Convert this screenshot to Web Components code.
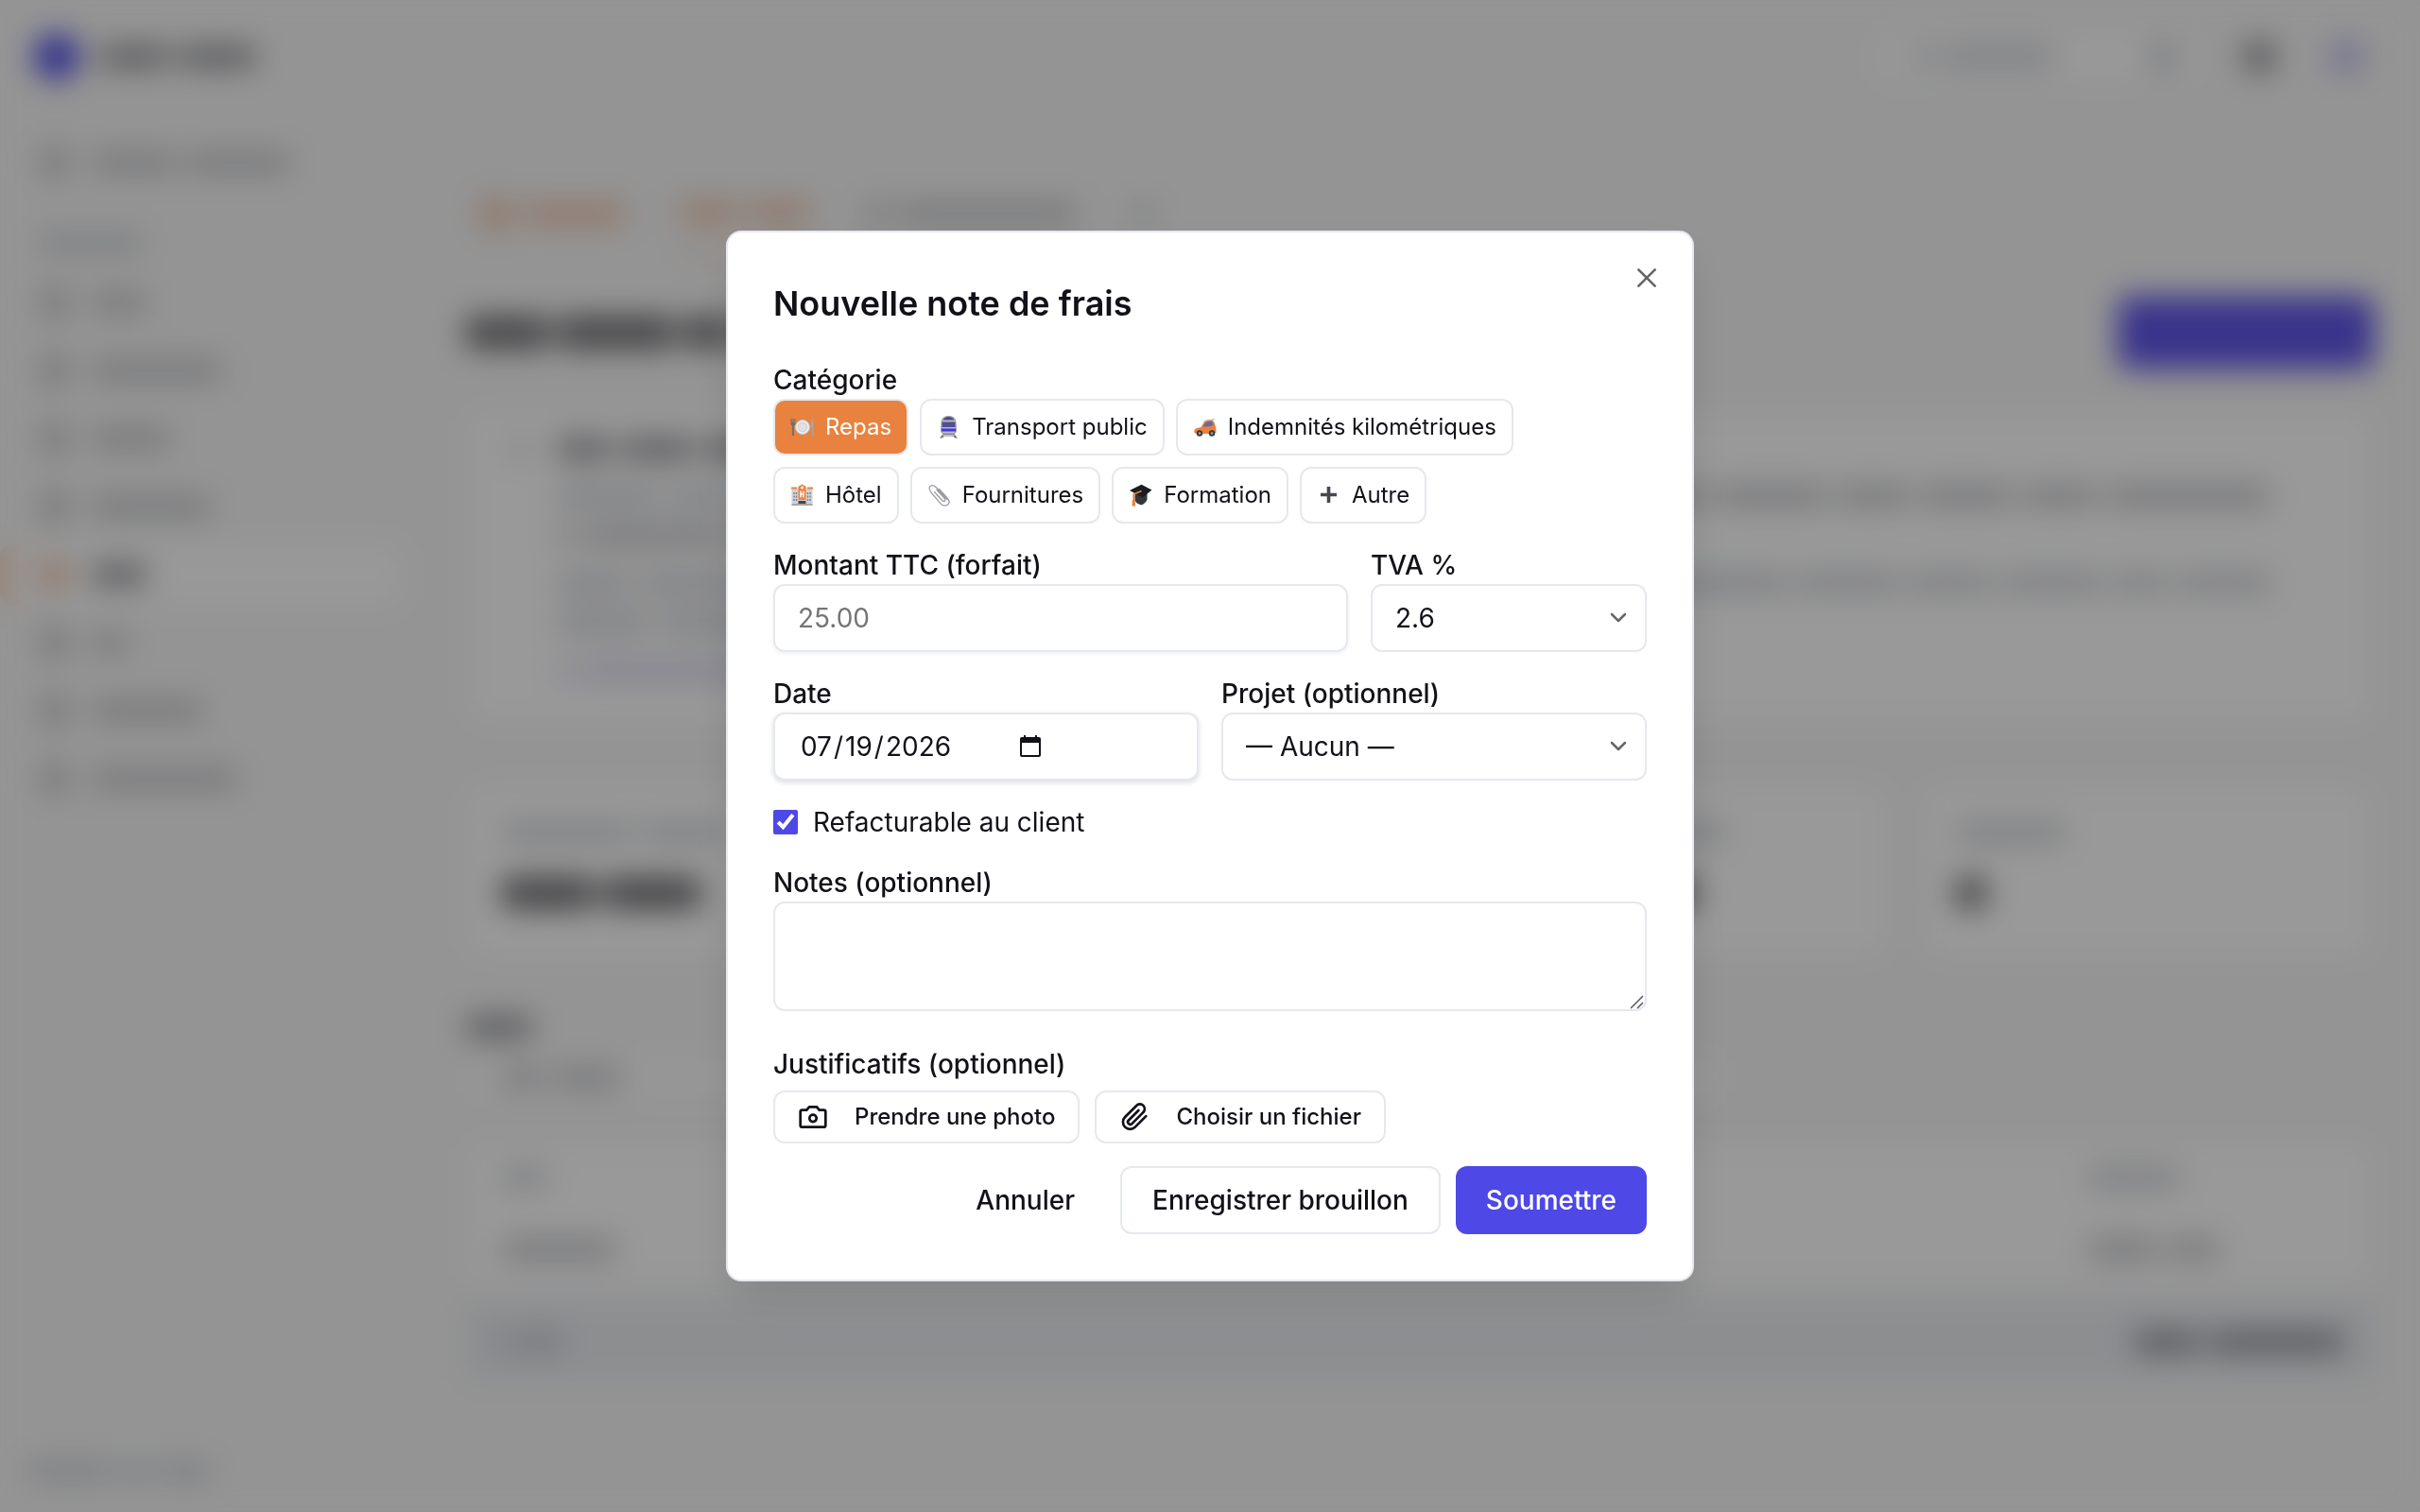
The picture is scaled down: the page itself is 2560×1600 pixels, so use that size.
<!DOCTYPE html>
<html lang="fr">
<head>
<meta charset="utf-8">
<meta name="viewport" content="width=device-width, initial-scale=1">
<title>Notes de frais</title>
<style>
  :root {
    --text: #111118;
    --border: #e5e8ee;
    --primary: #4d48e6;
    --accent: #e8823e;
    --page: #f7f7f7;
  }

  * {
    box-sizing: border-box;
  }

  body {
    margin: 0;
    background: var(--page);
    color: var(--text);
    font: 400 28px/40px Inter, "Liberation Sans", sans-serif;
  }
</style>
</head>
<body>
<expense-page></expense-page>
<modal-dialog heading="Nouvelle note de frais">
  <expense-form></expense-form>
</modal-dialog>

<script>
const base = `
  *, *::before, *::after { box-sizing: border-box; }
  button, input, select, textarea { font: inherit; color: inherit; margin: 0; }
  h1, h2, p { margin: 0; }
`;

/* Pictogrammes des catégories, dessinés sur une grille de 24 */
const emojis = {
  repas: `
    <path d="M0 3v5q0 2 1.400 2.500V21h2V10.500Q5 10 5 8V3H4v4h-.8V3H2v4h-.8V3z" fill="#6b7072"/>
    <circle cx="12.500" cy="12" r="7.500" fill="#eceef0" stroke="#c4c7cb" stroke-width="1"/>
    <circle cx="12.500" cy="12" r="4.800" fill="#dfe1e4" stroke="#cbced2" stroke-width="1"/>
    <path d="M24 3q-2.800 2-2.800 9h1v9H24z" fill="#a4a7aa"/>`,
  train: `
    <path d="M7 18h10l4.500 5.500h-3L17 21.500H7l-1.500 2h-3z" fill="#77787c"/>
    <path d="M6 20.500h12" stroke="#c5c6ca"/>
    <path d="M4.500 7Q4.500.5 12 .5T19.500 7l.5 9q0 2.500-3 3H7q-3-.5-3-3z" fill="#b9bac8" stroke="#8b8c9c" stroke-width=".8"/>
    <path d="M6 4.500Q7.500 1 12 1t6 3.500z" fill="#4f4d83"/>
    <path d="M5 6.500h14V12H5z" fill="#514f8d"/>
    <path d="M4.500 13.500h15v3h-15z" fill="#4239df"/>`,
  voiture: `
    <path d="M1 18q-1-4 3-5l4-1 3-5q1-2 4-2h4q3 0 4 5l1 4v4l-3 1H3z" fill="#e8823e"/>
    <path d="M10 11.500l2.500-4Q13.500 6 16 6h4l1 4q-5 2-11 1.500z" fill="#6b6a93"/>
    <path d="M11 6.500q2-2 5-2h5l1-1.500" fill="#bfc0c6" stroke="#aeb0b6" stroke-width="1"/>
    <circle cx="6.500" cy="18.500" r="3.200" fill="#37383d"/><circle cx="6.500" cy="18.500" r="1.300" fill="#a4a6ab"/>
    <circle cx="19.500" cy="18.500" r="3.200" fill="#37383d"/><circle cx="19.500" cy="18.500" r="1.300" fill="#a4a6ab"/>`,
  hotel: `
    <path d="M1 5h7V3l4-2.500L16 3v2h7v18H1z" fill="#d1d2d5"/>
    <path d="M.5 3.500h6v2h-6zM17.500 3.500h6v2h-6z" fill="#e8823e"/>
    <path d="M8 3l4-2.500L16 3v14H8z" fill="#e8823e"/>
    <circle cx="12" cy="4" r="1.500" fill="#fff"/>
    <path d="M10.500 7.500v7M13.500 7.500v7M10.500 11h3" stroke="#fff" stroke-width="1.400"/>
    <path d="M3.500 9v10M6 9v10M18 9v10M20.500 9v10" stroke="#77797f" stroke-width="1.300" stroke-dasharray="2 1.500"/>
    <path d="M8 18h8v5H8z" fill="#45464a"/><path d="M1 22h22" stroke="#a5a6aa" stroke-width="2"/>`,
  trombone: `
    <path d="M20.500 16.500L8.500 3.500C6 .8 2.500 1 1.800 3.500S2 7.500 4 9.800l9.500 11c2.500 2.800 6 2.800 7.800 1s1.700-4-.3-6.300L12 5.500M7 8.500l8 9c1 1.200 2.400 1.200 3 .5s.5-1.600-.4-2.800L9.500 6.500" fill="none" stroke="#9b9da2" stroke-width="1.300" stroke-linecap="round"/>`,
  diplome: `
    <path d="M6 9v8q1 4 7 5.500 5-2.500 6-6V9z" fill="#35363a"/>
    <path d="M13 .8L24 6.500 14 14.500.500 7z" fill="#1c1d21"/>
    <path d="M13 7.500L4.800 11v12" fill="none" stroke="#e8823e" stroke-width="1.800"/>
    <path d="M3.300 17h3l.3 6.500H3z" fill="#e8823e"/>`,
  plus: `
    <path d="M3.500 11.500h17M12 3v17" stroke="#46484d" stroke-width="3.600"/>`
};

const icons = {
  fermer: '<path d="M5.500 5.500l13 13M18.500 5.500l-13 13"/>',
  photo: '<path d="M3.500 6.500H7L9 4h6l2 2.500h3.500q1.500 0 1.500 1.500v10.500q0 1.500-1.500 1.500h-17Q2 20 2 18.500V8q0-1.500 1.500-1.500z"/><circle cx="12" cy="13" r="2.800"/>',
  fichier: '<path d="M21.200 11.300l-8.600 8.700a5.600 5.600 0 0 1-8-8l8.700-8.600a3.800 3.800 0 1 1 5.300 5.300l-8.500 8.600a1.900 1.900 0 0 1-2.700-2.700l7.900-7.900"/>'
};

/* Icône au trait, taille héritée de l'hôte */
class LineIcon extends HTMLElement {
  connectedCallback() {
    const root = this.attachShadow({ mode: 'open' });
    root.innerHTML = `
      <style>
        :host { display: block; width: 32px; height: 32px; flex: none; }
        svg { display: block; width: 100%; height: 100%; }
      </style>
      <svg viewBox="0 0 24 24" fill="none" stroke="currentColor" stroke-width="2"
        stroke-linecap="round" stroke-linejoin="round" aria-hidden="true">${icons[this.getAttribute('name')]}</svg>
    `;
  }
}

class CategoryChip extends HTMLElement {
  connectedCallback() {
    const root = this.attachShadow({ mode: 'open' });
    const active = this.hasAttribute('active');
    root.innerHTML = `
      <style>
        ${base}
        :host { display: block; }
        button {
          display: flex;
          align-items: center;
          gap: 12px;
          height: 60px;
          padding: 0 16px;
          border: 2px solid var(--border);
          border-radius: 12px;
          background: #fff;
          font-size: 24px;
          line-height: 32px;
          cursor: pointer;
        }
        button[aria-pressed="true"] { background: var(--accent); color: #fff; }
        svg { display: block; width: 25px; height: 24px; }
      </style>
      <button type="button" aria-pressed="${active}">
        <svg viewBox="0 0 24 24" aria-hidden="true">${emojis[this.getAttribute('icon')]}</svg>
        <slot></slot>
      </button>
    `;
    root.querySelector('button').addEventListener('click', () => {
      this.dispatchEvent(new CustomEvent('category-picked', { bubbles: true, composed: true }));
    });
  }

  setActive(active) {
    this.shadowRoot.querySelector('button').setAttribute('aria-pressed', active);
  }
}

class AppButton extends HTMLElement {
  connectedCallback() {
    const root = this.attachShadow({ mode: 'open' });
    const icon = this.getAttribute('icon');
    root.innerHTML = `
      <style>
        ${base}
        :host { display: block; }
        button {
          display: flex;
          align-items: center;
          gap: 28px;
          height: 72px;
          padding: 0 32px;
          border: 0;
          border-radius: 12px;
          background: transparent;
          font-weight: 500;
          white-space: nowrap;
          cursor: pointer;
        }
        :host([variant="outline"]) button { border: 2px solid var(--border); background: #fff; }
        :host([variant="primary"]) button { background: var(--primary); color: #fff; }
        :host([size="small"]) button { height: 56px; padding: 0 24px; font-size: 24px; }
      </style>
      <button type="button">${icon ? `<line-icon name="${icon}"></line-icon>` : ''}<slot></slot></button>
    `;
  }
}

class ModalDialog extends HTMLElement {
  connectedCallback() {
    const root = this.attachShadow({ mode: 'open' });
    root.innerHTML = `
      <style>
        ${base}
        :host {
          position: fixed;
          inset: 0;
          display: flex;
          align-items: center;
          justify-content: center;
          padding: 32px;
          background: rgba(0, 0, 0, 0.4);
          backdrop-filter: blur(16px);
        }
        section {
          position: relative;
          width: 100%;
          max-width: 1024px;
          max-height: 100%;
          padding: 48px;
          border: 2px solid var(--border);
          border-radius: 16px;
          background: #fff;
          box-shadow: 0 20px 50px -10px rgba(0, 0, 0, 0.16);
        }
        h2 { margin-bottom: 34px; font-size: 36px; line-height: 54px; font-weight: 600; }
        .close {
          position: absolute;
          top: 32px;
          right: 32px;
          padding: 0;
          border: 0;
          background: none;
          color: #666;
          cursor: pointer;
        }
      </style>
      <section role="dialog" aria-modal="true" aria-labelledby="heading">
        <h2 id="heading">${this.getAttribute('heading')}</h2>
        <slot></slot>
        <button class="close" type="button" aria-label="Fermer"><line-icon name="fermer"></line-icon></button>
      </section>
    `;
    root.querySelector('.close').addEventListener('click', () => this.remove());
  }
}

class ExpenseForm extends HTMLElement {
  connectedCallback() {
    const root = this.attachShadow({ mode: 'open' });
    root.innerHTML = `
      <style>
        ${base}
        :host { display: block; }
        form { display: flex; flex-direction: column; gap: 24px; }
        label, .label { display: block; font-weight: 500; }
        .chips { display: flex; flex-wrap: wrap; gap: 12px; }
        .amount { display: grid; grid-template-columns: 1fr 292px; gap: 24px; }
        .half { display: grid; grid-template-columns: 1fr 1fr; gap: 24px; }
        .control {
          display: block;
          width: 100%;
          height: 72px;
          padding: 0 24px;
          border: 2px solid var(--border);
          border-radius: 12px;
          background: #fff;
          outline: 0;
        }
        .raised { box-shadow: 0 2px 4px rgba(20, 30, 60, 0.06); }
        .date { display: flex; align-items: center; box-shadow: 0 2px 4px 1px rgba(20, 30, 60, 0.12); }
        ::placeholder { color: #757575; opacity: 1; }
        select.control {
          appearance: none;
          background: #fff url('data:image/svg+xml,<svg xmlns="http://www.w3.org/2000/svg" width="20" height="14" fill="none" stroke="%23666" stroke-width="2.500" stroke-linecap="round" stroke-linejoin="round"><path d="M3 3l7 7 7-7"/></svg>') no-repeat right 18px center;
        }
        input[type="date"] { width: 258px; padding: 0 0 0 2px; border: 0; outline: 0; background: none; }
        ::-webkit-datetime-edit-fields-wrapper { padding: 0; }
        ::-webkit-datetime-edit-text { padding: 0 1px; }
        ::-webkit-calendar-picker-indicator {
          width: 24px;
          height: 24px;
          padding: 0;
          margin: 0;
          background: url('data:image/svg+xml,<svg xmlns="http://www.w3.org/2000/svg" viewBox="0 0 24 24"><path d="M3 2h2V0h2v2h10V0h2v2h2q2 0 2 2v17q0 2-2 2H3q-2 0-2-2V4q0-2 2-2zM3 8v13h18V8z" fill="%23111118" fill-rule="evenodd"/></svg>') no-repeat center / contain;
        }
        .check { display: flex; align-items: center; gap: 16px; font-weight: 400; }
        .check input { width: 26px; height: 26px; accent-color: var(--primary); }
        textarea.control { height: 116px; padding: 16px 24px; resize: vertical; }
        textarea::-webkit-resizer {
          background: url('data:image/svg+xml,<svg xmlns="http://www.w3.org/2000/svg" width="15" height="15" stroke="%23555" stroke-width="1.500"><path d="M0 14L13 1M7 14l6-6"/></svg>') no-repeat right bottom;
        }
        .proofs { padding-top: 12px; }
        .files { display: flex; gap: 16px; padding-top: 8px; }
        .actions { display: flex; justify-content: flex-end; gap: 16px; }
      </style>
      <form>
        <div role="group" aria-labelledby="category">
          <span class="label" id="category">Catégorie</span>
          <div class="chips">
            <category-chip icon="repas" active>Repas</category-chip>
            <category-chip icon="train">Transport public</category-chip>
            <category-chip icon="voiture">Indemnités kilométriques</category-chip>
            <category-chip icon="hotel">Hôtel</category-chip>
            <category-chip icon="trombone">Fournitures</category-chip>
            <category-chip icon="diplome">Formation</category-chip>
            <category-chip icon="plus">Autre</category-chip>
          </div>
        </div>
        <div class="amount">
          <div>
            <label for="amount">Montant TTC (forfait)</label>
            <input class="control raised" id="amount" type="text" inputmode="decimal" placeholder="25.00">
          </div>
          <div>
            <label for="vat">TVA %</label>
            <select class="control" id="vat"><option>2.6</option></select>
          </div>
        </div>
        <div class="half">
          <div>
            <label for="date">Date</label>
            <div class="control date"><input id="date" type="date" value="2026-07-19"></div>
          </div>
          <div>
            <label for="project">Projet (optionnel)</label>
            <select class="control" id="project"><option>— Aucun —</option></select>
          </div>
        </div>
        <label class="check"><input type="checkbox" checked>Refacturable au client</label>
        <div>
          <label for="notes">Notes (optionnel)</label>
          <textarea class="control" id="notes"></textarea>
        </div>
        <div class="proofs" role="group" aria-labelledby="proofs">
          <span class="label" id="proofs">Justificatifs (optionnel)</span>
          <div class="files">
            <app-button variant="outline" size="small" icon="photo">Prendre une photo</app-button>
            <app-button variant="outline" size="small" icon="fichier">Choisir un fichier</app-button>
          </div>
        </div>
        <div class="actions">
          <app-button>Annuler</app-button>
          <app-button variant="outline">Enregistrer brouillon</app-button>
          <app-button variant="primary">Soumettre</app-button>
        </div>
      </form>
    `;

    const chips = root.querySelectorAll('category-chip');
    root.addEventListener('category-picked', (e) => {
      chips.forEach(chip => chip.setActive(chip === e.target));
    });
  }
}

/* Ligne de squelette : une barre par largeur donnée dans "w" */
class GhostLine extends HTMLElement {
  connectedCallback() {
    const root = this.attachShadow({ mode: 'open' });
    const widths = this.getAttribute('w').split(' ');
    root.innerHTML = `
      <style>
        :host { display: flex; align-items: center; gap: 8px; flex: none; color: #c6c7cb; }
        :host([tone="faint"]) { color: #d3d5da; }
        :host([tone="strong"]) { color: #909196; }
        :host([tone="bold"]) { color: #707074; }
        :host([tone="accent"]) { color: #f0c3a8; }
        :host([tone="link"]) { color: #d9daee; }
        i { height: 22px; border-radius: 10px; background: currentColor; }
        :host([size="large"]) i { height: 34px; }
      </style>
      ${widths.map(w => `<i style="width: ${w}px"></i>`).join('')}
    `;
  }
}

class SideNav extends HTMLElement {
  connectedCallback() {
    const root = this.attachShadow({ mode: 'open' });
    const items = [60, 140, 84, 128, 60, 40, 120, 156];
    const link = (w, current) => `
      <div class="item${current ? ' current' : ''}">
        <ghost-line w="28" size="large" tone="${current ? 'accent' : ''}"></ghost-line>
        <ghost-line w="${w}" tone="${current ? 'strong' : ''}"></ghost-line>
      </div>`;
    root.innerHTML = `
      <style>
        :host { display: flex; flex-direction: column; padding: 24px 20px; }
        .item { display: flex; align-items: center; gap: 24px; height: 64px; padding: 0 24px; border-radius: 12px; }
        .brand { display: flex; align-items: center; gap: 20px; height: 72px; padding: 0 16px; margin-bottom: 44px; }
        .brand i { width: 48px; height: 48px; border-radius: 24px; background: var(--primary); }
        .section { padding: 42px 20px 20px; }
        nav { display: flex; flex-direction: column; gap: 8px; }
        .current { background: #fff; box-shadow: -20px 0 #fbe4d6; }
        .foot { margin-top: auto; padding: 0 8px 8px; }
      </style>
      <div class="brand"><i></i><ghost-line w="76 84" tone="strong"></ghost-line></div>
      ${link('92 112')}
      <div class="section"><ghost-line w="112" tone="faint"></ghost-line></div>
      <nav>${items.map((w, i) => link(w, i === 4)).join('')}</nav>
      <div class="foot"><ghost-line w="92 32 56" tone="faint"></ghost-line></div>
    `;
  }
}

class StatCard extends HTMLElement {
  connectedCallback() {
    const root = this.attachShadow({ mode: 'open' });
    root.innerHTML = `
      <style>
        :host {
          display: flex;
          flex-direction: column;
          gap: 36px;
          box-sizing: border-box;
          height: 188px;
          padding: 40px 36px;
          border: 2px solid var(--border);
          border-radius: 20px;
          background: #fff;
        }
      </style>
      <ghost-line w="${this.getAttribute('label')}" tone="faint"></ghost-line>
      <ghost-line w="${this.getAttribute('value')}" tone="bold" size="large"></ghost-line>
    `;
  }
}

/* Page de liste en cours de chargement, visible en arrière-plan de la fenêtre */
class ExpensePage extends HTMLElement {
  connectedCallback() {
    const root = this.attachShadow({ mode: 'open' });
    root.innerHTML = `
      <style>
        ${base}
        :host { display: grid; grid-template-columns: 444px 1fr; min-height: 100vh; }
        header { display: flex; align-items: center; justify-content: flex-end; gap: 44px; height: 120px; padding: 0 60px; }
        .search { display: flex; align-items: center; gap: 100px; width: 344px; height: 60px; padding: 0 36px; border: 2px solid var(--border); border-radius: 12px; background: #fff; }
        .dot { width: 36px; height: 36px; border-radius: 18px; background: #97989c; }
        .avatar { background: #c0bdf2; margin-left: 12px; }
        main { padding: 64px 48px; }
        .tabs { display: flex; align-items: flex-start; gap: 56px; height: 88px; padding: 0 16px; }
        .tabs div { display: flex; align-items: center; gap: 12px; height: 84px; }
        .tabs .current { border-bottom: 4px solid #f0c3a8; }
        .title { display: flex; align-items: center; justify-content: space-between; height: 80px; margin: 40px 0; }
        .title i { width: 272px; height: 78px; border-radius: 12px; background: #6157e8; }
        .info { display: flex; align-items: flex-start; gap: 28px; height: 336px; padding: 30px 44px; border: 2px solid var(--border); border-radius: 20px; background: #fff; }
        .info > div { display: flex; flex-direction: column; flex: 1; gap: 20px; }
        .split { display: flex; justify-content: space-between; padding-right: 64px; }
        .gap { padding-top: 8px; }
        .stats { display: grid; grid-template-columns: repeat(4, 1fr); gap: 32px; margin: 60px 0; }
        .filter { display: flex; width: 66%; height: 60px; padding: 0 36px; margin: 12px 0 36px; border: 2px solid var(--border); border-radius: 12px; background: #fcfcfc; }
        .table { border: 2px solid var(--border); border-radius: 16px; background: #fff; }
        .row { display: grid; grid-template-columns: 1fr 266px; align-items: center; height: 76px; padding: 0 36px; }
        .total { display: flex; align-items: center; justify-content: space-between; height: 84px; margin-top: 16px; padding: 0 32px; border-radius: 12px; background: #ebedf1; }
      </style>
      <side-nav></side-nav>
      <div>
        <header>
          <div class="search"><ghost-line w="24 120" tone="faint"></ghost-line><ghost-line w="28" size="large" tone="faint"></ghost-line></div>
          <div class="dot"></div>
          <div class="dot avatar"></div>
        </header>
        <main>
          <div class="tabs">
            <div><ghost-line w="32" size="large" tone="accent"></ghost-line><ghost-line w="110" tone="accent"></ghost-line></div>
            <div class="current"><ghost-line w="64 68" tone="accent"></ghost-line></div>
            <div><ghost-line w="28 190"></ghost-line></div>
            <div><ghost-line w="28" tone="faint"></ghost-line></div>
          </div>
          <div class="title">
            <ghost-line w="90 124 46 100" tone="bold" size="large"></ghost-line>
            <i></i>
          </div>
          <div class="info">
            <ghost-line w="22" tone="faint"></ghost-line>
            <div>
              <ghost-line w="60 80 120 200" tone="strong"></ghost-line>
              <div class="split gap"><ghost-line w="110 60 200" tone="faint"></ghost-line><ghost-line w="170 130 130 110 70 90 120 80 100 82 174"></ghost-line></div>
              <ghost-line w="20 150 200"></ghost-line>
              <div class="split gap"><ghost-line w="80 110 160" tone="faint"></ghost-line><ghost-line w="170 120 150 110 90 110 60 100" tone="faint"></ghost-line></div>
              <ghost-line w="100 110 160" tone="faint"></ghost-line>
              <div class="gap"><ghost-line w="16 180 60" tone="link"></ghost-line></div>
            </div>
          </div>
          <div class="stats">
            <stat-card label="140 90" value="100 104"></stat-card>
            <stat-card label="140 90" value="100 104"></stat-card>
            <stat-card label="170 92" value="126 104"></stat-card>
            <stat-card label="116" value="32"></stat-card>
          </div>
          <ghost-line w="72" tone="strong"></ghost-line>
          <div class="filter"><ghost-line w="46 74"></ghost-line></div>
          <div class="table">
            <div class="row"><ghost-line w="50" tone="faint"></ghost-line><ghost-line w="100" tone="faint"></ghost-line></div>
            <div class="row"><ghost-line w="122"></ghost-line><ghost-line w="76 56"></ghost-line></div>
          </div>
          <div class="total"><ghost-line w="14 50"></ghost-line><ghost-line w="72 144" tone="strong"></ghost-line></div>
        </main>
      </div>
    `;
    this.inert = true;
  }
}

customElements.define('line-icon', LineIcon);
customElements.define('category-chip', CategoryChip);
customElements.define('app-button', AppButton);
customElements.define('modal-dialog', ModalDialog);
customElements.define('expense-form', ExpenseForm);
customElements.define('ghost-line', GhostLine);
customElements.define('side-nav', SideNav);
customElements.define('stat-card', StatCard);
customElements.define('expense-page', ExpensePage);
</script>
</body>
</html>
